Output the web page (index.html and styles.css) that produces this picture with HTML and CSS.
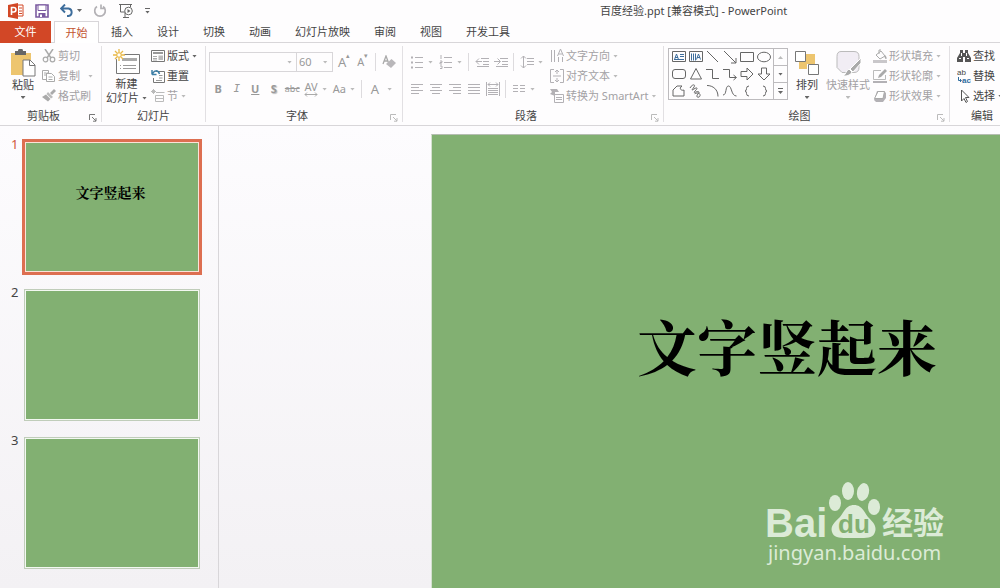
FILE: index.html
```
<!DOCTYPE html>
<html lang="zh-CN">
<head>
  <meta charset="UTF-8">
  <meta name="viewport" content="width=device-width, initial-scale=1">
  <title>百度经验.ppt [兼容模式] - PowerPoint</title>
  <link rel="stylesheet" href="styles.css">
</head>
<body>
  <header class="titlebar">
    <div class="quick-access">
      <svg class="app-logo" width="16" height="16" viewBox="0 0 16 16"><path d="M9 2h6v11H9z" fill="#fff" stroke="#d24726"/><path d="M11 5h3M11 8h3M11 10.500h3" stroke="#d24726"/><path d="M0 2l10-2v16L0 14z" fill="#d24726"/><path d="M3.500 12V4.500h2.200a2.200 2.200 0 0 1 0 4.500H3.500" fill="none" stroke="#fff" stroke-width="1.600"/></svg>
      <button class="qat-btn" aria-label="保存"><svg width="14" height="14" viewBox="0 0 14 14"><path d="M1 1h12v12H1z" fill="#fff" stroke="#7b5aa0" stroke-width="1.600"/><path d="M3 1h8v5.500H3z" fill="#fff" stroke="#7b5aa0"/><path d="M3.500 9h7v4h-7z" fill="#7b5aa0"/><path d="M5 10.500h2v2.500H5z" fill="#fff"/></svg></button>
      <button class="qat-btn undo" aria-label="撤消"><svg width="14" height="14" viewBox="0 0 14 14"><path d="M1 4.500h7.500a3.800 3.800 0 0 1 0 7.500H7M5 .5l-4 4 4 4" fill="none" stroke="#3d6d9c" stroke-width="1.900"/></svg><i class="caret"></i></button>
      <button class="qat-btn" aria-label="恢复"><svg width="14" height="14" viewBox="0 0 14 14"><path d="M4 2.500a5.300 5.300 0 1 0 6 0M8 .5v4h4.500" fill="none" stroke="#b3b1b5" stroke-width="1.700"/></svg></button>
      <button class="qat-btn" aria-label="从头开始"><svg width="16" height="16" viewBox="0 0 16 16"><path d="M1 1.500h13M2.500 2v7h4M12.500 2v2M5 14.500h6M7 9v5" fill="none" stroke="#666"/><circle cx="10.500" cy="8" r="3.800" fill="#fff" stroke="#666"/><path d="M9.500 6l3 2-3 2z" fill="#666"/></svg></button>
      <button class="qat-btn more" aria-label="自定义"><i class="caret"></i></button>
    </div>
    <h1 class="title">百度经验.ppt [兼容模式] - PowerPoint</h1>
  </header>

  <nav class="tabs">
    <button class="tab file">文件</button>
    <button class="tab active">开始</button>
    <button class="tab">插入</button>
    <button class="tab">设计</button>
    <button class="tab">切换</button>
    <button class="tab">动画</button>
    <button class="tab">幻灯片放映</button>
    <button class="tab">审阅</button>
    <button class="tab">视图</button>
    <button class="tab">开发工具</button>
  </nav>

  <section class="ribbon">
    <div class="group clipboard">
      <div class="tools">
        <button class="big">
          <svg width="26" height="28" viewBox="0 0 26 28"><path d="M1 4h20v22H1z" fill="#edc56f"/><path d="M5 2h3a2.500 2.500 0 0 1 5 0h3v4H5z" fill="#666"/><path d="M13 11h7l5 5v11H13z" fill="#fff" stroke="#777"/><path d="M19.500 11v5.500H25" fill="none" stroke="#777"/></svg>
          <span>粘贴</span><i class="caret"></i>
        </button>
        <div class="rows">
          <button class="row off"><svg width="14" height="14" viewBox="0 0 14 14"><path d="M3 0l6 9M11 0L5 9" fill="none" stroke="#aaa" stroke-width="1.500"/><circle cx="3.500" cy="10.500" r="2.300" fill="none" stroke="#aaa" stroke-width="1.200"/><circle cx="10.500" cy="10.500" r="2.300" fill="none" stroke="#aaa" stroke-width="1.200"/></svg>剪切</button>
          <button class="row off"><svg width="14" height="14" viewBox="0 0 14 14"><path d="M.5 1.500h6V4H4.500v6.500h-4zM4.500 4.500h5l3 3v5h-8z" fill="#fff" stroke="#aaa"/><path d="M2 4h2M2 6h2M6.500 8h4M6.500 10.500h4" stroke="#aaa"/></svg>复制<i class="caret wide"></i></button>
          <button class="row off"><svg width="14" height="14" viewBox="0 0 14 14"><path d="M12 0l2 2-4 4-2-2z" fill="#aaa"/><path d="M6 3l5 5-2 1.500L4.500 5z" fill="#bbb"/><path d="M4 5.500L8.500 10 6 12.500 0 8z" fill="#aaa"/></svg>格式刷</button>
        </div>
      </div>
      <div class="caption has-launcher">剪贴板<svg class="launcher dark" width="8" height="8" viewBox="0 0 8 8"><path d="M.5 6V.5H6M3 3l4 4M7 4v3.200H4"/></svg></div>
    </div>

    <div class="group slides">
      <div class="tools">
        <button class="big">
          <svg width="28" height="28" viewBox="0 0 28 28"><path d="M3.500 5.500h23v19h-23z" fill="#fff" stroke="#777"/><path d="M9 10.500h15" stroke="#aaa" stroke-width="3"/><path d="M7 16.500h1M10 16.500h13M7 19.500h1M10 19.500h13" stroke="#999"/><circle cx="6" cy="6" r="5" fill="#fff"/><path d="M6 0v12M0 6h12M2 2l8 8M10 2l-8 8" stroke="#e9b949" stroke-width="1.300"/><circle cx="6" cy="6" r="2.200" fill="#fff" stroke="#e9b949"/></svg>
          <span>新建</span><span class="with-caret">幻灯片<i class="caret"></i></span>
        </button>
        <div class="rows">
          <button class="row"><svg width="14" height="14" viewBox="0 0 14 14"><path d="M.5 1.500h13v11H.5z" fill="#fff" stroke="#777"/><path d="M2 4h10" stroke="#999" stroke-width="2"/><path d="M2 7.500h4M2 9.500h4M2 11h4" stroke="#aaa"/><path d="M7.500 6.500H12V11H7.500z" fill="#bbb"/></svg>版式<i class="caret"></i></button>
          <button class="row"><svg width="14" height="14" viewBox="0 0 14 14"><path d="M4.500 2.500h9v11h-11V9" fill="#fff" stroke="#777"/><path d="M8 6.500h3.500M8 9h3.500M5 11.500h6" stroke="#999"/><path d="M1 5.500h4.500M1 1v4.500C3 1 7 .5 8.500 5" fill="none" stroke="#3d7fa6" stroke-width="1.500"/></svg>重置</button>
          <button class="row off"><svg width="14" height="14" viewBox="0 0 14 14"><path d="M5 3.500h8.500M4.500 6.500h8v6h-8zM4.500 9.500h8M2.500 0v5M0 2.500h5M1 1l3 3M4 1L1 4" fill="none" stroke="#bbb"/></svg>节<i class="caret"></i></button>
        </div>
      </div>
      <div class="caption">幻灯片</div>
    </div>

    <div class="group font">
      <div class="tools stack">
        <div class="line">
          <label class="combo name"><select aria-label="字体"><option></option></select><i class="caret"></i></label>
          <label class="combo size"><select aria-label="字号"><option>60</option></select><i class="caret"></i></label>
          <button class="ic letter" aria-label="增大字号">A<sup>▴</sup></button>
          <button class="ic letter small" aria-label="减小字号">A<sup>▾</sup></button>
          <i class="sep"></i>
          <button class="ic" aria-label="清除格式"><svg width="14" height="14" viewBox="0 0 14 14"><path d="M1 9L4 1l3 8M2 6h4" fill="none" stroke="#aaa" stroke-width="1.300"/><path d="M9.500 4L14 8l-5 5-5-4z" fill="#b9b7ba"/></svg></button>
        </div>
        <div class="line">
          <button class="ic"><b>B</b></button>
          <button class="ic italic"><em>I</em></button>
          <button class="ic"><b><u>U</u></b></button>
          <button class="ic shadow"><b>S</b></button>
          <button class="ic tiny"><s>abc</s></button>
          <button class="ic drop spacing"><span>AV<svg width="14" height="5" viewBox="0 0 14 5"><path d="M1 2.500h12M3 .5l-2 2 2 2M11 .5l2 2-2 2" fill="none" stroke="#aaa"/></svg></span><i class="caret"></i></button>
          <button class="ic drop">Aa<i class="caret"></i></button>
          <i class="sep"></i>
          <button class="ic drop letter last">A<i class="caret"></i></button>
        </div>
      </div>
      <div class="caption has-launcher">字体<svg class="launcher" width="8" height="8" viewBox="0 0 8 8"><path d="M.5 6V.5H6M3 3l4 4M7 4v3.200H4"/></svg></div>
    </div>

    <div class="group paragraph">
      <div class="tools">
        <div class="stack para-icons">
          <div class="line">
            <button class="ic drop" aria-label="项目符号"><svg class="g" width="14" height="14" viewBox="0 0 14 14"><path d="M1 2.500h2M1 7.500h2M1 12.500h2" stroke-width="2"/><path d="M5 2.500h8M5 7.500h8M5 12.500h8"/></svg><i class="caret"></i></button>
            <button class="ic drop" aria-label="编号"><svg class="g" width="14" height="14" viewBox="0 0 14 14"><path d="M2 0v4M1 6h2v1.500H1V9h2M1 11h2v2.500H1M5 2.500h8M5 7.500h8M5 12.500h8"/></svg><i class="caret"></i></button>
            <i class="sep"></i>
            <button class="ic" aria-label="降低列表级别"><svg class="g" width="14" height="14" viewBox="0 0 14 14"><path d="M6 3.500h8M8 6.500h6M8 9.500h6M2 11.500h12M1 6.500h6M4 3.500l-3 3 3 3"/></svg></button>
            <button class="ic" aria-label="提高列表级别"><svg class="g" width="14" height="14" viewBox="0 0 14 14"><path d="M6 3.500h8M8 6.500h6M8 9.500h6M2 11.500h12M0 6.500h6M3.500 3.500l3 3-3 3"/></svg></button>
            <i class="sep"></i>
            <button class="ic drop" aria-label="行距"><svg class="g" width="14" height="14" viewBox="0 0 14 14"><path d="M3.500 1v12M1 3.500L3.500 1 6 3.500M1 10.500L3.500 13 6 10.500M7 3.500h7M7 6.500h7M7 9.500h7"/></svg><i class="caret"></i></button>
          </div>
          <div class="line">
            <button class="ic" aria-label="左对齐"><svg class="g" width="14" height="14" viewBox="0 0 14 14"><path d="M1 2.500h12M1 5.500h8M1 8.500h12M1 11.500h8"/></svg></button>
            <button class="ic" aria-label="居中"><svg class="g" width="14" height="14" viewBox="0 0 14 14"><path d="M1 2.500h12M3 5.500h8M1 8.500h12M3 11.500h8"/></svg></button>
            <button class="ic" aria-label="右对齐"><svg class="g" width="14" height="14" viewBox="0 0 14 14"><path d="M1 2.500h12M5 5.500h8M1 8.500h12M5 11.500h8"/></svg></button>
            <button class="ic" aria-label="两端对齐"><svg class="g" width="14" height="14" viewBox="0 0 14 14"><path d="M1 2.500h12M1 5.500h12M1 8.500h12M1 11.500h12"/></svg></button>
            <button class="ic" aria-label="分散对齐"><svg class="g" width="14" height="14" viewBox="0 0 14 14"><path d="M.5 0v14M13.500 0v14M2 2.500h10M4 .5l-2 2 2 2M10 .5l2 2-2 2M2 6.500h10M2 8.500h10M2 10.500h10M2 12.500h10"/></svg></button>
            <i class="sep"></i>
            <button class="ic drop" aria-label="分栏"><svg class="g" width="14" height="14" viewBox="0 0 14 14"><path d="M1 3.500h5M1 6.500h5M1 9.500h5M8 3.500h5M8 6.500h5M8 9.500h5"/></svg><i class="caret"></i></button>
          </div>
        </div>
        <div class="rows">
          <button class="row off"><svg class="g" width="14" height="14" viewBox="0 0 14 14"><path d="M1.500 1v12M4.500 1v12M8.500 8v5M12.500 8v5M7.500 7l3-7 3 7M8.500 5h4"/></svg>文字方向<i class="caret"></i></button>
          <button class="row off"><svg class="g" width="14" height="14" viewBox="0 0 14 14"><path d="M4 .5H.5v13H4M10 .5h3.500v13H10M7 1v4M5 3l2-2 2 2M7 9v4M5 11l2 2 2-2M3 7h8"/></svg>对齐文本<i class="caret"></i></button>
          <button class="row off"><svg class="g" width="14" height="14" viewBox="0 0 14 14"><path d="M0 0h7l2 3H5v4L0 5l2-2z" fill="#b3b1b5" stroke="none"/><path d="M4.500 5.500h9v8h-9zM6 8.500h6M6 10.500h6"/></svg>转换为 SmartArt<i class="caret"></i></button>
        </div>
      </div>
      <div class="caption has-launcher">段落<svg class="launcher" width="8" height="8" viewBox="0 0 8 8"><path d="M.5 6V.5H6M3 3l4 4M7 4v3.200H4"/></svg></div>
    </div>

    <div class="group drawing">
      <div class="tools">
        <div class="gallery">
          <div class="shapes">
            <button aria-label="文本框"><svg viewBox="0 0 14 14"><path d="M.5 1.500h13v10H.5z"/><path d="M2.500 9.500L4.500 4l2 5.500M3 7.500h3M8 4.500h4M8 6.500h4M2 9.500h10" stroke="#3d6d9c"/></svg></button>
            <button aria-label="竖排文本框"><svg viewBox="0 0 14 14"><path d="M.5 1.500h13v10H.5z"/><path d="M7.500 9.500L9.500 4l2 5.500M8 7.500h3M2.500 3.500v7M4.500 3.500v7M6.500 3.500v7" stroke="#3d6d9c"/></svg></button>
            <button aria-label="直线"><svg viewBox="0 0 14 14"><path d="M1 1l11 11"/></svg></button>
            <button aria-label="箭头"><svg viewBox="0 0 14 14"><path d="M1 1l12 12M13 8v5H8"/></svg></button>
            <button aria-label="矩形"><svg viewBox="0 0 14 14"><path d="M.5 2.500h13v9H.5z"/></svg></button>
            <button aria-label="椭圆"><svg viewBox="0 0 14 14"><ellipse cx="7" cy="7" rx="6.500" ry="4.800"/></svg></button>
            <button aria-label="圆角矩形"><svg viewBox="0 0 14 14"><rect x=".5" y="2.500" width="13" height="9" rx="2.500"/></svg></button>
            <button aria-label="三角形"><svg viewBox="0 0 14 14"><path d="M7 1.500l5.500 10.500h-11z"/></svg></button>
            <button aria-label="肘形连接符"><svg viewBox="0 0 14 14"><path d="M0 2.500h6.500v9H13"/></svg></button>
            <button aria-label="肘形箭头"><svg viewBox="0 0 14 14"><path d="M0 2.500h6.500v8H13M10.500 8l3 2.500-3 2.500"/></svg></button>
            <button aria-label="右箭头"><svg viewBox="0 0 14 14"><path d="M1 4.500h6V1l6 6-6 6V9.500H1z"/></svg></button>
            <button aria-label="下箭头"><svg viewBox="0 0 14 14"><path d="M4.500 1v6H1l6 6 6-6H9.500V1z"/></svg></button>
            <button aria-label="任意多边形"><svg viewBox="0 0 14 14"><path d="M1 12V6l4-4h5c-4 3 0 5 2 4v6z"/></svg></button>
            <button aria-label="自由曲线"><svg viewBox="0 0 14 14"><path d="M1 4c2-4 6-4 4-1s-3 4 0 2 4-1 2 1-3 3 0 2 4 0 2 2-1 4 1 3 1-4-1-4-4 1-3 1"/></svg></button>
            <button aria-label="弧形"><svg viewBox="0 0 14 14"><path d="M1 1.500c6 0 11 4 11 11"/></svg></button>
            <button aria-label="曲线"><svg viewBox="0 0 14 14"><path d="M0 11C4 11 2 2 5.500 2S8 12 13.500 12"/></svg></button>
            <button aria-label="左大括号"><svg viewBox="0 0 14 14"><path d="M9 2Q6.500 2 6.500 4.500T5 7q1.500 0 1.500 2.500T9 12"/></svg></button>
            <button aria-label="右大括号"><svg viewBox="0 0 14 14"><path d="M6 2q2.500 0 2.500 2.500T10 7Q8.500 7 8.500 9.500T6 12"/></svg></button>
          </div>
          <div class="scroller">
            <button aria-label="上一行"><i class="caret up"></i></button>
            <button aria-label="下一行"><i class="caret"></i></button>
            <button class="more" aria-label="其他"><i class="caret"></i></button>
          </div>
        </div>
        <button class="big arrange">
          <svg width="24" height="28" viewBox="0 0 24 28"><path d="M10 5h10v10H10zM4 11h8v9H4z" fill="#edc56f"/><path d="M.5 2.500h10v10H.5zM13.500 15.500h10v10h-10z" fill="#fff" stroke="#777"/></svg>
          <span>排列</span><i class="caret"></i>
        </button>
        <button class="big off">
          <svg width="28" height="28" viewBox="0 0 28 28"><path d="M7 2.500h13q5 0 5 5v11q0 5-5 5H8l-5-5v-11q0-5 4-5z" fill="#f1edf4" stroke="#bbb"/><path d="M27 9v5l-8 9-3-3zM15 20l3 3c-2 4-6 4-9 4 3-1 3-6 6-7z" fill="#aaa" stroke="#fff"/></svg>
          <span>快速样式</span><i class="caret"></i>
        </button>
        <div class="rows">
          <button class="row off"><svg width="14" height="14" viewBox="0 0 14 14"><path d="M3 6l5-4 4 5-5 3zM6 5V1h2" fill="none" stroke="#aaa"/><path d="M12 6c2 2 2 4 1 4s-2-2-1-4z" fill="#aaa"/><path d="M0 11h14v3H0z" fill="#c9c7ca"/></svg>形状填充<i class="caret"></i></button>
          <button class="row off"><svg width="14" height="14" viewBox="0 0 14 14"><path d="M8 1.500H.5v9h12V6" fill="none" stroke="#bbb"/><path d="M12 0l2 2-6 6-3 1 1-3z" fill="#aaa"/><path d="M0 12h14v2H0z" fill="#b3b1b5"/></svg>形状轮廓<i class="caret"></i></button>
          <button class="row off"><svg width="14" height="14" viewBox="0 0 14 14"><path d="M4 2h7l2 2v5l-3 4H3L1 11z" fill="#b3b1b5"/><path d="M5 2.500h6.500L10 9.500H1.500z" fill="#fff" stroke="#aaa"/></svg>形状效果<i class="caret"></i></button>
        </div>
      </div>
      <div class="caption has-launcher">绘图<svg class="launcher" width="8" height="8" viewBox="0 0 8 8"><path d="M.5 6V.5H6M3 3l4 4M7 4v3.200H4"/></svg></div>
    </div>

    <div class="group editing">
      <div class="tools">
        <div class="rows">
          <button class="row"><svg width="14" height="14" viewBox="0 0 14 14"><path d="M3 1h3v3h2V1h3v3l3 5v4H8V8H6v5H0V9l3-5z" fill="#555"/><path d="M2 9.500h2M10 9.500h2M4.500 4v3M9.500 4v3" stroke="#fff"/></svg>查找</button>
          <button class="row"><svg class="replace" width="14" height="16" viewBox="0 0 14 16"><text x="0" y="7" fill="#444">ab</text><text x="5" y="15" font-weight="700" fill="#2e6c9e">ac</text><path d="M1.500 9v3.500H4M3 11l1.500 1.500L3 14" fill="none" stroke="#2e6c9e"/></svg>替换</button>
          <button class="row"><svg width="14" height="14" viewBox="0 0 14 14"><path d="M4.500 1v11L7 9.500l2 4 1.500-1-2-4H12z" fill="#fff" stroke="#555"/></svg>选择<i class="caret"></i></button>
        </div>
      </div>
      <div class="caption">编辑</div>
    </div>
  </section>

  <main class="workspace">
    <ol class="thumbs">
      <li class="thumb selected"><span class="num">1</span><div class="preview">文字竖起来</div></li>
      <li class="thumb"><span class="num">2</span><div class="preview"></div></li>
      <li class="thumb"><span class="num">3</span><div class="preview"></div></li>
    </ol>
    <div class="stage">
      <div class="slide"><h2 class="slide-title">文字竖起来</h2></div>
      <svg class="watermark" width="200" height="100" viewBox="0 0 200 100">
        <text class="wm-bai" x="5" y="61">Bai</text>
        <ellipse cx="75" cy="27" rx="6" ry="8"/>
        <ellipse cx="88" cy="15" rx="6" ry="9"/>
        <ellipse cx="103" cy="16" rx="6" ry="9" transform="rotate(12 103 16)"/>
        <ellipse cx="114" cy="31" rx="6" ry="8"/>
        <path d="M94 29c8 0 10 7 14 12 5 5 9 9 7 15-2 7-9 6-21 6s-20 1-22-6c-2-6 3-10 8-15 4-5 6-12 14-12z"/>
        <text class="wm-du" x="78" y="57">du</text>
        <text class="wm-cn" x="122" y="58">经验</text>
        <text class="wm-url" x="8" y="84">jingyan.baidu.com</text>
      </svg>
    </div>
  </main>
</body>
</html>
```
FILE: styles.css
```
* {
  box-sizing: border-box;
}
html, body {
  margin: 0;
  height: 100%;
}
body {
  display: flex;
  flex-direction: column;
  overflow: hidden;
  background: #fefdfe;
  color: #444;
  font-family: "Noto Sans", "Noto Sans CJK SC", sans-serif;
  font-size: 11px;
  line-height: 14px;
}
button, select {
  font: inherit;
  color: inherit;
  background: none;
  border: 0;
  padding: 0;
  margin: 0;
  white-space: nowrap;
}
svg {
  display: block;
  flex: none;
}

/* title bar */
.titlebar {
  display: flex;
  align-items: center;
  height: 21px;
  flex: none;
}
.quick-access {
  flex: 0 0 60%;
  display: flex;
  align-items: center;
  gap: 11px;
  height: 19px;
  padding-left: 8px;
}
.qat-btn {
  display: flex;
  align-items: center;
  gap: 3px;
}
.title {
  margin: 0;
  font-size: 11px;
  font-weight: 400;
  white-space: nowrap;
}
.caret {
  flex: none;
  width: 5px;
  height: 3px;
  background: #666;
  clip-path: polygon(0 0, 100% 0, 50% 100%);
}
.caret.up {
  transform: rotate(180deg);
  background: #bbb;
}
.more {
  flex-direction: column;
  gap: 2px;
}
.more::before {
  content: "";
  width: 5px;
  height: 1px;
  background: #666;
}

/* tabs */
.tabs {
  display: flex;
  flex: none;
  height: 22px;
  border-bottom: 1px solid #d8d6d9;
}
.tab {
  height: 22px;
  padding: 0 12px;
}
.tab.file {
  width: 51px;
  margin-right: 3px;
  background: #d24726;
  color: #fff;
}
.tab.active {
  width: 45px;
  padding: 0;
  background: #fff;
  border: 1px solid #d8d6d9;
  border-bottom: 0;
  color: #c2532f;
}

/* ribbon */
.ribbon {
  display: flex;
  flex: none;
  height: 83px;
  padding: 3px 0;
  border-bottom: 1px solid #d8d6d9;
}
.group {
  flex: none;
  display: flex;
  flex-direction: column;
  border-right: 1px solid #e2e0e3;
}
.clipboard { width: 102px; }
.slides { width: 104px; }
.font { width: 197px; }
.paragraph { width: 261px; }
.drawing { width: 286px; }
.editing { width: 64px; border: 0; }
.tools {
  display: flex;
  flex: none;
  height: 60px;
  padding: 0 4px;
}
.caption {
  position: relative;
  height: 16px;
  line-height: 19px;
  text-align: center;
}
.caption.has-launcher {
  padding-right: 14px;
}
.launcher {
  position: absolute;
  right: 4px;
  bottom: 0;
  fill: none;
  stroke: #bbb;
}
.launcher.dark {
  stroke: #777;
}
.big {
  display: flex;
  flex-direction: column;
  align-items: center;
  padding: 3px 3px 0;
}
.big svg {
  margin-bottom: 1px;
}
.big .caret {
  margin-top: 4px;
}
.clipboard .big {
  padding: 3px 6px 0;
}
.slides .big {
  padding: 3px 0 0;
}
.slides .big svg {
  margin-bottom: 0;
}
.big .with-caret {
  display: flex;
  align-items: center;
  gap: 3px;
}
.big .with-caret .caret {
  margin: 0;
}
.rows {
  display: flex;
  flex-direction: column;
}
.row {
  display: flex;
  align-items: center;
  height: 20px;
  gap: 2px;
}
.row .caret {
  margin-left: 1px;
}
.row .caret.wide {
  margin-left: 6px;
}
.off {
  color: #a3a1a4;
}
.off .caret, .font .caret, .para-icons .caret {
  background: #bbb;
}
.slides .rows {
  margin-left: 4px;
}
.g {
  fill: none;
  stroke: #b3b1b5;
}

/* font and paragraph tools */
.stack {
  display: flex;
  flex-direction: column;
  gap: 7px;
  padding-top: 6px;
}
.tools.stack {
  padding-left: 3px;
}
.line {
  display: flex;
  align-items: center;
  height: 20px;
}
.font .line {
  color: #999;
}
.combo {
  display: flex;
  align-items: center;
  height: 20px;
  border: 1px solid #d8d6d9;
  padding-right: 4px;
}
.combo select {
  appearance: none;
  flex: 1;
  min-width: 0;
  padding-left: 2px;
  outline: 0;
}
.combo.name {
  width: 89px;
}
.combo.size {
  width: 37px;
  margin-left: -1px;
}
.ic {
  display: flex;
  align-items: center;
  justify-content: center;
  width: 19px;
  height: 20px;
}
.ic.drop {
  width: 29px;
  gap: 4px;
}
.letter {
  font-size: 13px;
}
.letter.small {
  font-size: 11px;
}
.letter.last {
  width: 34px;
  gap: 8px;
}
.letter sup {
  font-size: 7px;
  line-height: 7px;
  align-self: flex-start;
}
.combo + .letter {
  margin-left: 2px;
}
.italic {
  font-family: "DejaVu Sans Mono", monospace;
}
.tiny {
  font-size: 9px;
}
.shadow {
  text-shadow: 1px 1px 1px #bbb;
}
.spacing span {
  line-height: 10px;
}
.sep {
  width: 1px;
  height: 18px;
  margin: 0 3px;
  background: #dddbde;
}
.para-icons {
  width: 143px;
}

/* shape gallery */
.gallery {
  display: flex;
  height: 52px;
  margin-top: 2px;
  border: 1px solid #bdbbbe;
}
.shapes {
  display: grid;
  grid-template-columns: repeat(6, 17px);
  padding-left: 1px;
}
.shapes button {
  display: flex;
  align-items: center;
  justify-content: center;
}
.shapes svg {
  width: 14px;
  height: 14px;
  fill: none;
  stroke: #666;
}
.scroller {
  display: flex;
  flex-direction: column;
  width: 14px;
  margin-left: 1px;
  border-left: 1px solid #bdbbbe;
}
.scroller button {
  flex: 1;
  display: flex;
  align-items: center;
  justify-content: center;
}
.scroller button + button {
  border-top: 1px solid #bdbbbe;
}
.arrange {
  margin: 0 1px 0 4px;
}
.editing .tools {
  padding-left: 7px;
}
.replace {
  font: 8px "Liberation Sans", sans-serif;
}

/* slides */
.workspace {
  flex: 1;
  display: flex;
  min-height: 0;
  background: linear-gradient(#fdfcfe, #f3f1f4);
}
.thumbs {
  flex: none;
  width: 219px;
  margin: 0;
  padding: 15px 0 0 11px;
  list-style: none;
  border-right: 1px solid #d8d6d9;
}
.thumb {
  display: flex;
  height: 131px;
  margin-bottom: 17px;
}
.num {
  width: 13px;
  font-size: 13px;
  line-height: 7px;
}
.preview {
  width: 176px;
  height: 132px;
  padding: 39px 3px 0 0;
  border: 1px solid #c0cdba;
  box-shadow: inset 0 0 0 1px #f3f8f1;
  background: #82b072;
  color: #000;
  font-family: "Noto Serif CJK SC", "Noto Sans CJK SC", serif;
  font-size: 14px;
  font-weight: 700;
  line-height: 22px;
  text-align: center;
}
.selected .num {
  color: #d0593c;
}
.selected .preview {
  border-color: #dd6f51;
  outline: 2px solid #dd6f51;
  outline-offset: -1px;
  box-shadow: inset 0 0 0 1px #fbe3d8, 0 0 0 2px #dd6f51;
}
.stage {
  position: relative;
  flex: 1;
  display: flex;
  min-width: 0;
  padding: 8px 0 0 212px;
}
.slide {
  flex: 1;
  padding: 170px 0 0 205px;
  background: #82b072;
  border-left: 1px solid #d5e0d0;
  border-top: 1px solid #b5bdb2;
}
.slide-title {
  margin: 0;
  color: #000;
  font-family: "Noto Serif CJK SC", "Noto Sans CJK SC", serif;
  font-size: 60px;
  font-weight: 700;
  line-height: 80px;
  white-space: nowrap;
}
.watermark {
  position: absolute;
  right: 40px;
  bottom: 12px;
  fill: #dcebd7;
}
.wm-bai {
  font: 700 40px "Liberation Sans", sans-serif;
}
.wm-du {
  font: 700 26px "Liberation Sans", sans-serif;
  fill: #82b072;
}
.wm-cn {
  font: 700 31px "Noto Sans CJK SC", sans-serif;
}
.wm-url {
  font: 400 20px "Noto Sans", sans-serif;
}
```
